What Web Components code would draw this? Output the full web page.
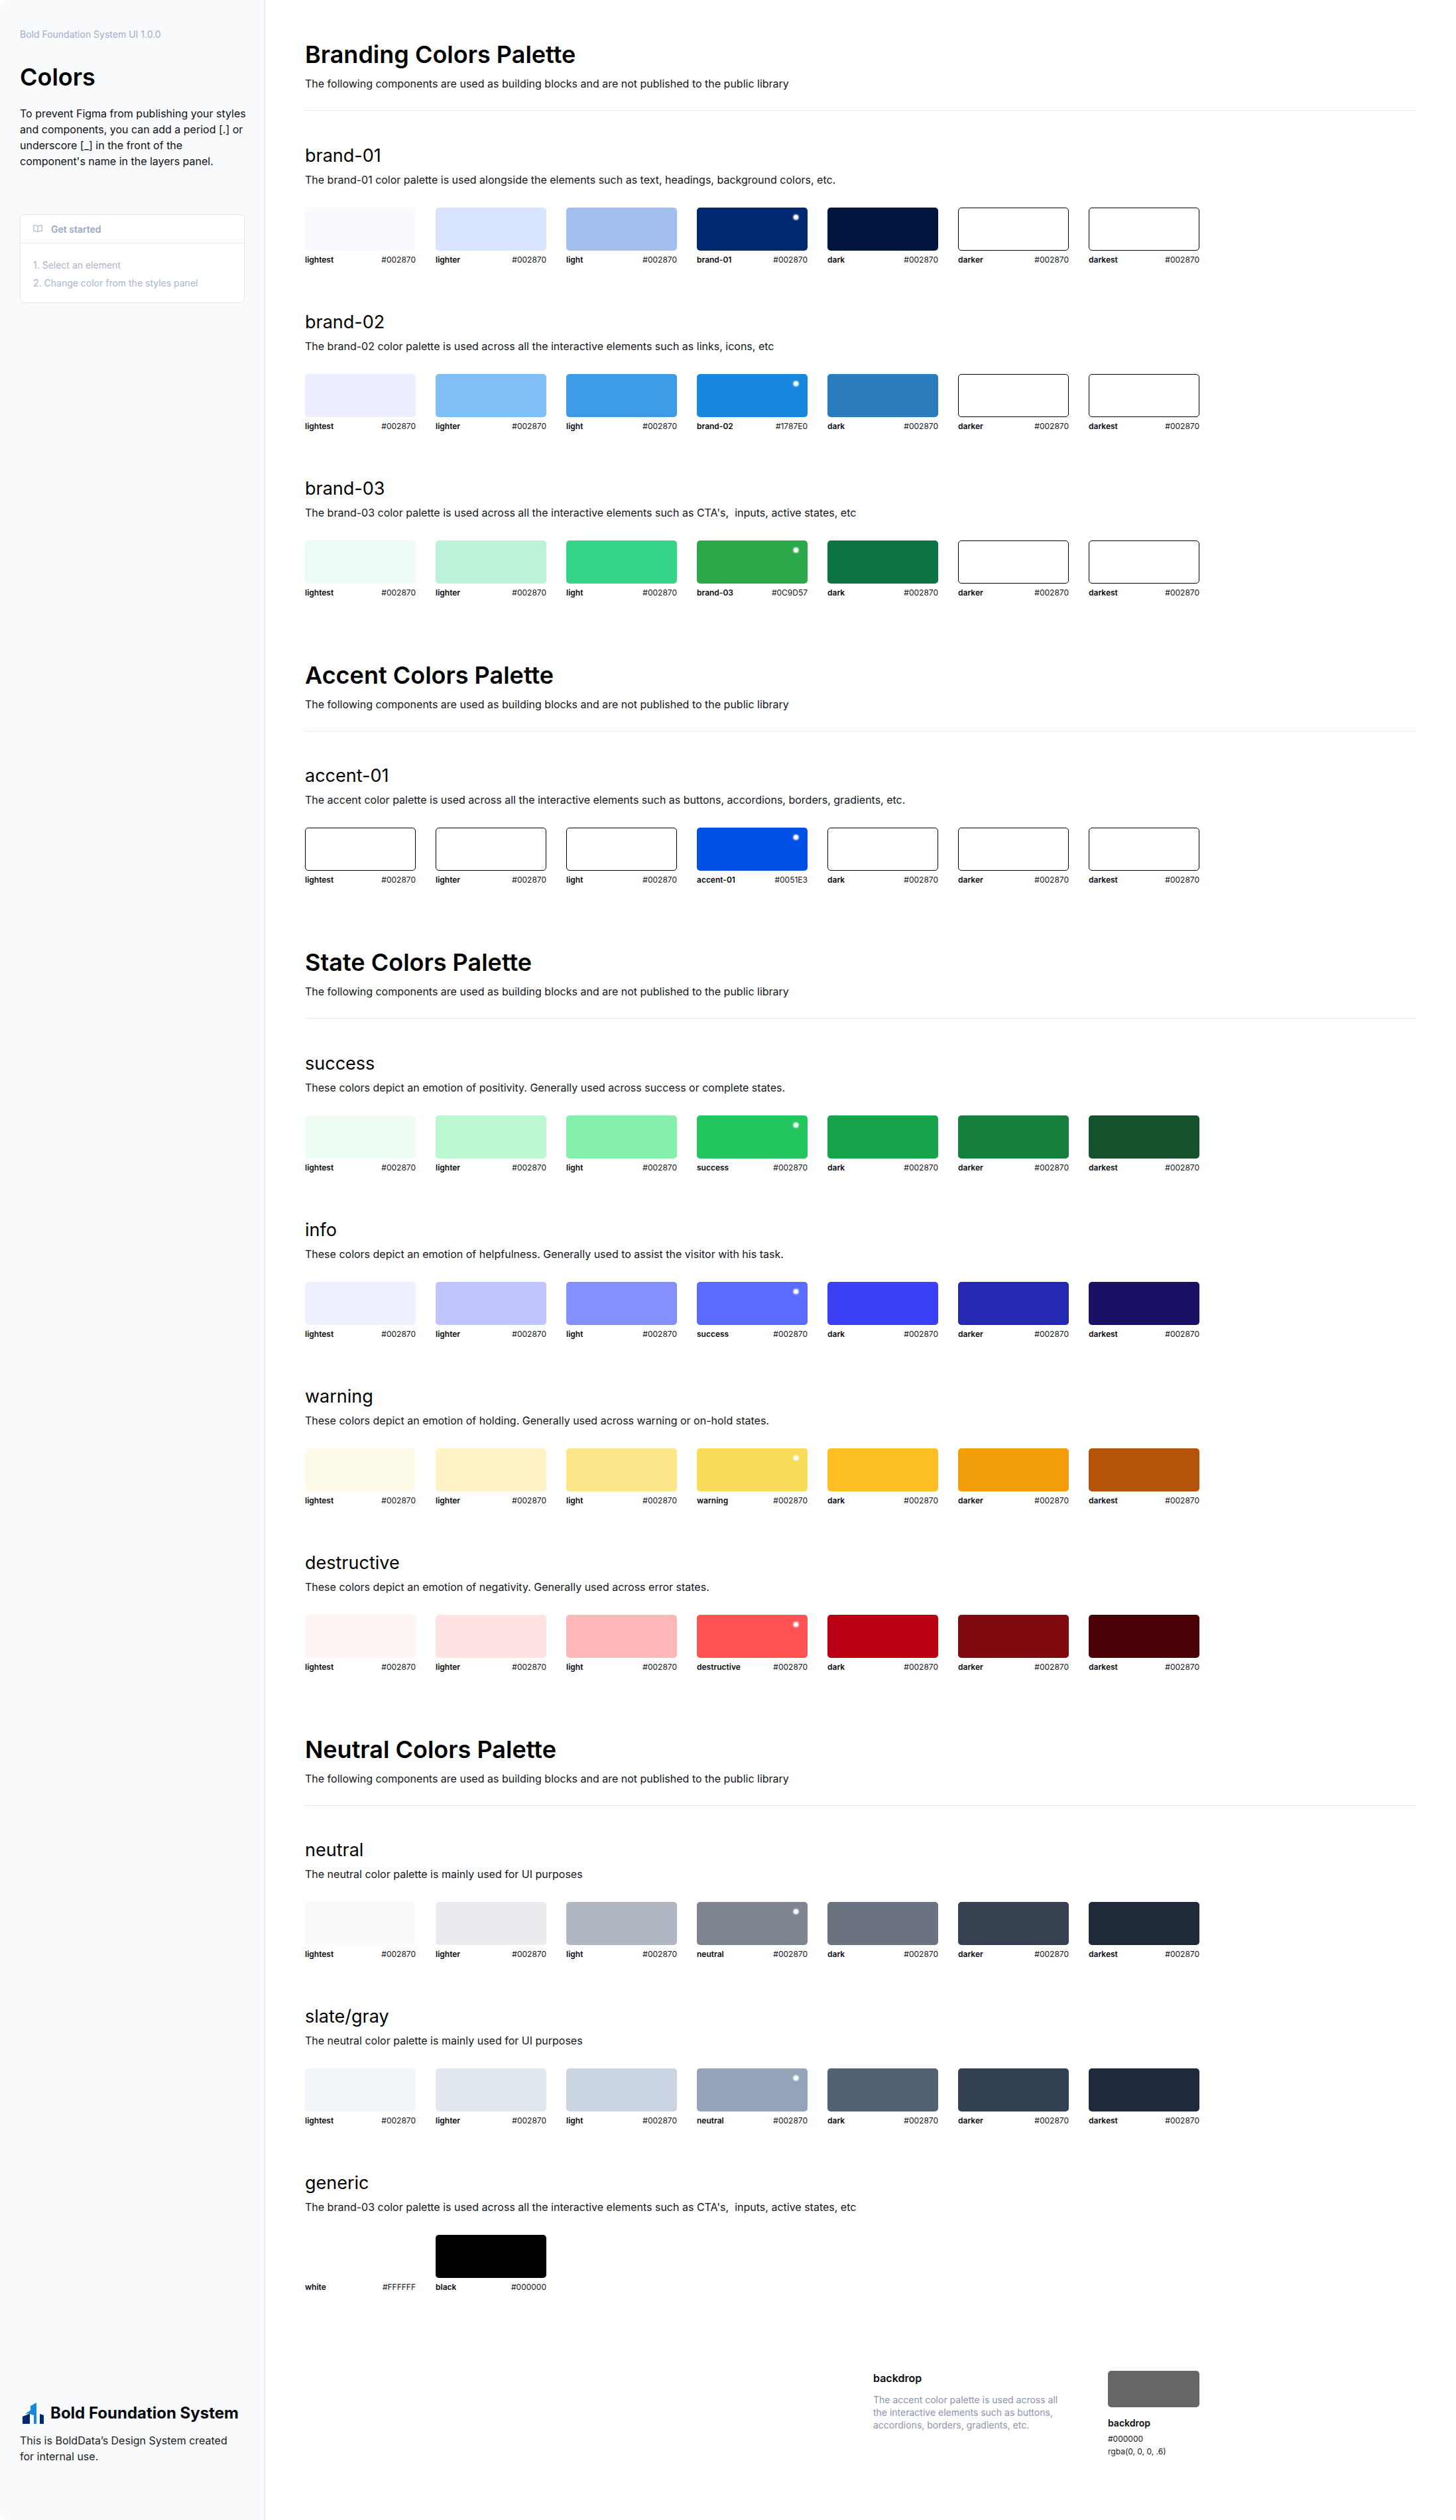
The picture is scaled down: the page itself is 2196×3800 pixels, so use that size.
<!DOCTYPE html>
<html lang="en">
<head>
<meta charset="utf-8">
<title>Colors</title>
<style>
  html, body { margin: 0; background: #fff; }
  body { font-family: Inter, "Liberation Sans", sans-serif; color: #000; }
  .page { display: flex; width: 2196px; height: 3800px; overflow: hidden; }
</style>
</head>
<body>
<div class="page">
  <side-bar></side-bar>
  <main-column>
    <palette-section title="Branding Colors Palette" sub="The following components are used as building blocks and are not published to the public library">
      <color-group name="brand-01" desc="The brand-01 color palette is used alongside the elements such as text, headings, background colors, etc." main="brand-01" colors="#F9FAFF,#D9E5FF,#A3BFF0,#002870,#00153D,,"></color-group>
      <color-group name="brand-02" desc="The brand-02 color palette is used across all the interactive elements such as links, icons, etc" main="brand-02" hex="#1787E0" colors="#EBEEFF,#80BFF5,#3D9CE5,#1787E0,#2B7CBD,,"></color-group>
      <color-group name="brand-03" desc="The brand-03 color palette is used across all the interactive elements such as CTA's,  inputs, active states, etc" main="brand-03" hex="#0C9D57" colors="#EEFBF4,#BBF2D8,#34D587,#2AA84A,#0C7445,,"></color-group>
    </palette-section>
    <palette-section title="Accent Colors Palette" sub="The following components are used as building blocks and are not published to the public library">
      <color-group name="accent-01" desc="The accent color palette is used across all the interactive elements such as buttons, accordions, borders, gradients, etc." main="accent-01" hex="#0051E3" colors=",,,#0051E3,,,"></color-group>
    </palette-section>
    <palette-section title="State Colors Palette" sub="The following components are used as building blocks and are not published to the public library">
      <color-group name="success" desc="These colors depict an emotion of positivity. Generally used across success or complete states." main="success" colors="#F0FDF4,#BBF7D0,#86EFAC,#22C55E,#16A34A,#15803D,#14532D"></color-group>
      <color-group name="info" desc="These colors depict an emotion of helpfulness. Generally used to assist the visitor with his task." main="success" colors="#EEF0FF,#C0C5FF,#8490FF,#5B6AFF,#3B40F5,#2528B0,#1A1066"></color-group>
      <color-group name="warning" desc="These colors depict an emotion of holding. Generally used across warning or on-hold states." main="warning" colors="#FEFCE8,#FEF3C7,#FDE68A,#F8DC5A,#FBBF24,#F59E0B,#B45309"></color-group>
      <color-group name="destructive" desc="These colors depict an emotion of negativity. Generally used across error states." main="destructive" colors="#FFF5F5,#FFE3E3,#FFB8B8,#FF5252,#B80012,#800A10,#4A0005"></color-group>
    </palette-section>
    <palette-section title="Neutral Colors Palette" sub="The following components are used as building blocks and are not published to the public library">
      <color-group name="neutral" desc="The neutral color palette is mainly used for UI purposes" main="neutral" colors="#F9FAFB,#E9EBEE,#B0B7C3,#7E8590,#6B7280,#374151,#1F2937"></color-group>
      <color-group name="slate/gray" desc="The neutral color palette is mainly used for UI purposes" main="neutral" colors="#F1F5F9,#E2E8F0,#CBD5E1,#94A3B8,#526174,#334155,#1E293B"></color-group>
      <color-group name="generic" desc="The brand-03 color palette is used across all the interactive elements such as CTA's,  inputs, active states, etc">
        <color-swatch label="white" hex="#FFFFFF" color="#FFFFFF"></color-swatch>
        <color-swatch label="black" hex="#000000" color="#000000"></color-swatch>
      </color-group>
    </palette-section>
    <backdrop-note></backdrop-note>
  </main-column>
</div>

<script>
  // sidebar with the intro, the get started card and the footer logo
  class SideBar extends HTMLElement {
    constructor() {
      super();
      this.attachShadow({ mode: "open" });
    }
    connectedCallback() {
      this.shadowRoot.innerHTML = `
      <style>
        :host {
          display: flex; flex-direction: column; justify-content: space-between;
          box-sizing: border-box; flex: none; width: 400px; height: 3800px;
          padding: 42px 28px 84px 30px; background: #F9FAFC;
          border-right: 2px solid #E7EBF2; border-radius: 16px 0 0 16px;
        }
        .ver { font-size: 14px; line-height: 20px; color: #A0AEC9; }
        h1 { margin: 32px 0 0; font-size: 36px; line-height: 44px; font-weight: 600; color: #000; }
        p { margin: 21px 0 0; width: 344px; font-size: 16px; line-height: 24px; color: #0F0F14; }
        .card { margin-top: 68px; width: 339px; box-sizing: border-box; background: #fff; border: 1px solid #E2E8F0; border-radius: 6px; }
        .head { display: flex; align-items: center; gap: 13px; height: 42px; padding: 0 19px; border-bottom: 1px solid #E2E8F0;
                font-size: 14px; font-weight: 600; color: #9AA8C2; }
        ol { margin: 0; padding: 19px 19px 16px; list-style: none; font-size: 14px; line-height: 27px; color: #A9B5CB; }
        .logo { display: flex; align-items: center; gap: 4px; margin-left: -2px; height: 44px; font-size: 24px; font-weight: 700; color: #04060F; }
        .foot p { margin: 8px 0 0; color: #1C1C24; width: 320px; }
      </style>
      <div>
        <div class="ver">Bold Foundation System UI 1.0.0</div>
        <h1>Colors</h1>
        <p>To prevent Figma from publishing your styles and components, you can add a period [.] or underscore [_] in the front of the component's name in the layers panel.</p>
        <div class="card">
          <div class="head">
            <svg width="14" height="12" viewBox="0 0 14 12" fill="none" stroke="#9AA8C2" stroke-width="1"><path d="M7 2.2C5.6 1 3 .8.8.8v8.6c2.2 0 4.8.2 6.2 1.6 1.4-1.4 4-1.6 6.2-1.6V.8C11 .8 8.4 1 7 2.2zM7 2.2V11"/></svg>
            <span>Get started</span>
          </div>
          <ol><li>1. Select an element</li><li>2. Change color from the styles panel</li></ol>
        </div>
      </div>
      <div class="foot">
        <div class="logo">
          <svg width="44" height="44" viewBox="0 0 44 44">
            <path fill="#1787E0" d="M10 24l8-5.500V12l9-5v32h-4V26l-8-2.500z"/>
            <path fill="#002870" d="M6 28l11-4.500V39H6zM32 24l6 2v13h-6z"/>
          </svg>
          <span>Bold Foundation System</span>
        </div>
        <p>This is BoldData’s Design System created for internal use.</p>
      </div>`;
    }
  }

  // right hand column
  class MainColumn extends HTMLElement {
    constructor() {
      super();
      this.attachShadow({ mode: "open" });
      this.shadowRoot.innerHTML = `
      <style>
        :host { display: block; box-sizing: border-box; flex: 1; padding: 60px 60px 0 60px; }
      </style>
      <slot></slot>`;
    }
  }

  // big title + subtitle + rule, then the groups
  class PaletteSection extends HTMLElement {
    constructor() {
      super();
      this.attachShadow({ mode: "open" });
    }
    connectedCallback() {
      this.shadowRoot.innerHTML = `
      <style>
        :host { display: block; margin-bottom: 94px; }
        h1 { margin: 0; font-size: 36px; line-height: 44px; font-weight: 600; color: #000; }
        p { margin: 10px 0 0; font-size: 16px; line-height: 24px; color: #14141A; white-space: pre-wrap; }
        hr { margin: 28px 0 49.5px; border: 0; border-top: 1.5px solid #E2E8F0; }
        .groups { display: flex; flex-direction: column; gap: 68px; }
      </style>
      <h1>${this.getAttribute("title")}</h1>
      <p>${this.getAttribute("sub")}</p>
      <hr>
      <div class="groups"><slot></slot></div>`;
    }
  }

  // one named row of seven swatches
  const STEPS = ["lightest", "lighter", "light", "", "dark", "darker", "darkest"];
  class ColorGroup extends HTMLElement {
    constructor() {
      super();
      this.attachShadow({ mode: "open" });
    }
    connectedCallback() {
      const colors = (this.getAttribute("colors") || "").split(",");
      const main = this.getAttribute("main");
      const hex = this.getAttribute("hex") || "#002870";
      const cells = this.hasAttribute("colors") ? STEPS.map((step, i) => {
        const color = colors[i] || "";
        const isMain = i === 3;
        return `<color-swatch label="${isMain ? main : step}" hex="${isMain ? hex : "#002870"}"
          ${color ? `color="${color}"` : ""} ${isMain ? "dot" : ""}></color-swatch>`;
      }).join("") : "";
      this.shadowRoot.innerHTML = `
      <style>
        :host { display: block; }
        h2 { margin: 0; font-size: 27px; line-height: 36px; font-weight: 400; color: #000; }
        p { margin: 6px 0 0; font-size: 16px; line-height: 24px; color: #14141A; white-space: pre-wrap; }
        .row { display: flex; gap: 30px; margin-top: 30px; }
      </style>
      <h2>${this.getAttribute("name")}</h2>
      <p>${this.getAttribute("desc")}</p>
      <div class="row">${cells}<slot></slot></div>`;
    }
  }

  class ColorSwatch extends HTMLElement {
    constructor() {
      super();
      this.attachShadow({ mode: "open" });
    }
    connectedCallback() {
      const color = this.getAttribute("color");
      const fill = color ? `background:${color}` : "background:#fff;border:1px solid #000";
      this.shadowRoot.innerHTML = `
      <style>
        :host { display: block; width: 167px; }
        .chip { position: relative; box-sizing: border-box; height: 65px; border-radius: 5px; }
        .dot { position: absolute; top: 11px; right: 14px; width: 7px; height: 7px; border-radius: 50%;
               background: #fff; box-shadow: 0 0 0 2px rgba(255,255,255,.3); }
        .meta { display: flex; justify-content: space-between; margin-top: 6px; font-size: 12px; line-height: 16px; color: #14141A; }
        b { font-weight: 600; color: #0A0A0F; }
      </style>
      <div class="chip" style="${fill}">${this.hasAttribute("dot") ? '<span class="dot"></span>' : ""}</div>
      <div class="meta"><b>${this.getAttribute("label")}</b><span>${this.getAttribute("hex")}</span></div>`;
    }
  }

  // the lone backdrop block at the bottom right
  class BackdropNote extends HTMLElement {
    constructor() {
      super();
      this.attachShadow({ mode: "open" });
      this.shadowRoot.innerHTML = `
      <style>
        :host { display: flex; gap: 74px; margin-left: 857px; padding-top: 24px; }
        .txt { width: 280px; }
        h3 { margin: 0; font-size: 16px; line-height: 22px; font-weight: 600; color: #0A0A0F; }
        .txt p { margin: 11.5px 0 0; font-size: 14px; line-height: 19px; color: #8C93AB; }
        .chip { width: 138px; height: 55px; border-radius: 5px; background: rgba(0,0,0,.6); }
        .val { width: 138px; }
        .val h4 { margin: 14px 0 0; font-size: 14px; line-height: 20px; font-weight: 600; color: #0A0A0F; }
        .val div.l { font-size: 12px; line-height: 19px; color: #14141A; }
        .val div.first { margin-top: 3.5px; }
      </style>
      <div class="txt">
        <h3>backdrop</h3>
        <p>The accent color palette is used across all the interactive elements such as buttons, accordions, borders, gradients, etc.</p>
      </div>
      <div class="val">
        <div class="chip"></div>
        <h4>backdrop</h4>
        <div class="l first">#000000</div>
        <div class="l">rgba(0, 0, 0, .6)</div>
      </div>`;
    }
  }

  customElements.define("color-swatch", ColorSwatch);
  customElements.define("color-group", ColorGroup);
  customElements.define("palette-section", PaletteSection);
  customElements.define("backdrop-note", BackdropNote);
  customElements.define("main-column", MainColumn);
  customElements.define("side-bar", SideBar);
</script>
</body>
</html>
